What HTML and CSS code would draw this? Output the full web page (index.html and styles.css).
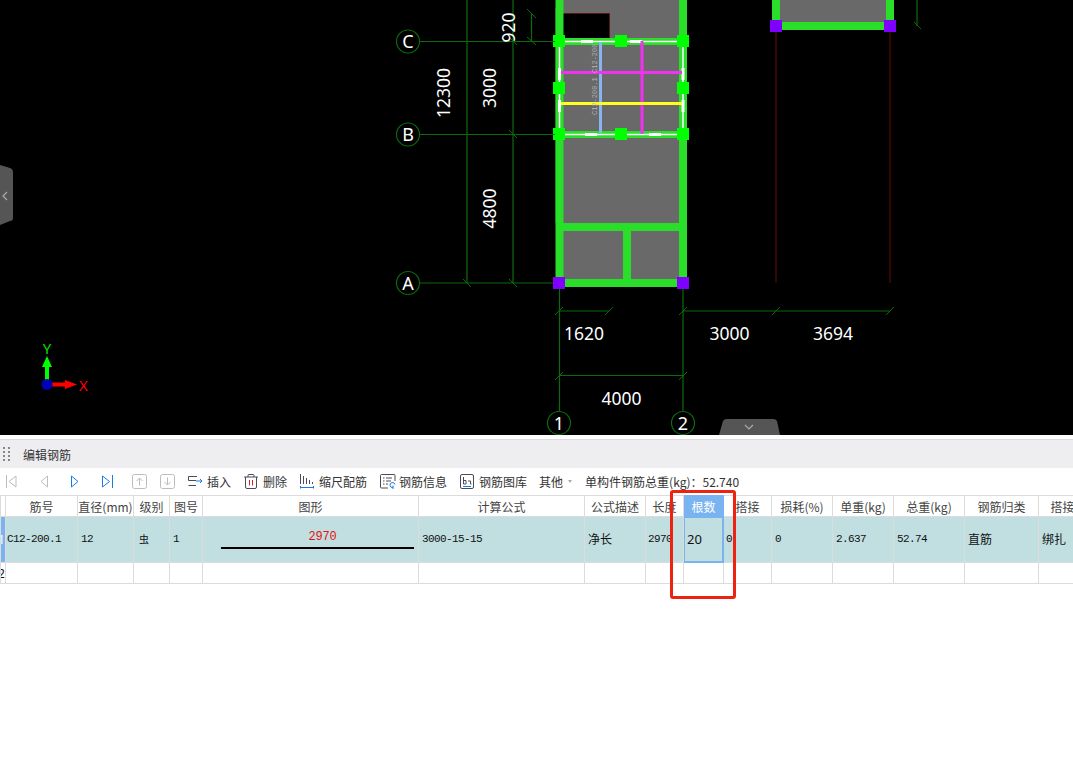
FILE: index.html
```html
<!DOCTYPE html>
<html lang="zh-CN">
  <head>
    <meta charset="UTF-8" />
    <title>编辑钢筋</title>
    <link rel="stylesheet" href="styles.css">
  </head>
  <body>
    <div class="viewport">
      <svg class="drawing" width="1073" height="435" viewBox="0 0 1073 435">
        <!-- slabs -->
        <rect class="slab" x="559" y="0" width="124" height="283" />
        <rect class="slab" x="776" y="0" width="114" height="26" />
        <path class="hole" d="M563.5 38V13.5H609.5V38" />
        <rect class="void" x="563" y="14" width="46" height="24" />

        <!-- beams -->
        <path class="beam" d="M559.5 8H559.5M559.5 0V283H683V0" />
        <path class="beam-wide" d="M555.7 8H563V223H555.7Z" />
        <path class="beam-thin" d="M559 227H683M627 227V283M776 0V26H890V0" />
        <path class="beam-sel" d="M559 41.5H683M559 134.5H683M559.5 41V134M683.5 41V134" />
        <path class="white-thin" d="M562 41.5H681M562 134.5H681M559.5 44V132M683 44V132" />
        <path class="white-thick" d="M581 41.5H593M630 41.5H642M585 134.5H597M649 134.5H661M559.5 68V80M559.5 100V112M683 68V80M683 100V112" />

        <!-- rebars in the selected span -->
        <path class="bar-blue" d="M600.5 42V133" />
        <path class="bar-magenta" d="M642 41V134M561 72.5H682" />
        <path class="bar-yellow" d="M561 103.5H682" />
        <text class="rebar-label" transform="translate(597 115) rotate(-90)">C12-200.1 C12-200</text>

        <!-- grips -->
        <g class="grip">
          <rect x="553" y="35" width="12" height="12" />
          <rect x="615" y="35" width="12" height="12" />
          <rect x="677" y="35" width="12" height="12" />
          <rect x="553" y="82" width="12" height="12" />
          <rect x="677" y="82" width="12" height="12" />
          <rect x="553" y="128" width="12" height="12" />
          <rect x="615" y="128" width="12" height="12" />
          <rect x="677" y="128" width="12" height="12" />
        </g>
        <g class="column">
          <rect x="553" y="277" width="12" height="12" />
          <rect x="677" y="277" width="12" height="12" />
          <rect x="770" y="20" width="12" height="12" />
          <rect x="884" y="20" width="12" height="12" />
        </g>

        <!-- dimension lines -->
        <path class="dim" d="M420 41.5H555M420 134.5H555M420 283H553M467 0V283M513 0V283M531.5 13V41M559.5 289V412M683 289V412M559 311H609M683 311H890M559 375.5H683M917 0V26" />
        <path class="tick" d="M463 279L471 287M509 279L517 287M509 130L517 138M509 37L517 45M527 9L536 18M527 37L536 45M555 315L563 307M605 315L613 307M679 315L687 307M772 315L780 307M886 315L894 307M555 380L563 372M679 380L687 372M914 22L921 29" />
        <path class="dim-red" d="M776 32V283M890 32V283" />

        <!-- axis bubbles -->
        <g class="bubble">
          <circle cx="408" cy="41.5" r="11.5" />
          <circle cx="408" cy="134.5" r="11.5" />
          <circle cx="408" cy="283" r="11.5" />
          <circle cx="559" cy="423" r="11.5" />
          <circle cx="683" cy="423" r="11.5" />
        </g>
        <text class="axis-name" x="408" y="48">C</text>
        <text class="axis-name" x="408" y="141">B</text>
        <text class="axis-name" x="408" y="289.5">A</text>
        <text class="axis-name" x="559" y="429.5">1</text>
        <text class="axis-name" x="683" y="429.5">2</text>

        <!-- dimension texts -->
        <text class="dim-text" x="584" y="340">1620</text>
        <text class="dim-text" x="729.5" y="340">3000</text>
        <text class="dim-text" x="833" y="340">3694</text>
        <text class="dim-text" x="621.5" y="405">4000</text>
        <text class="dim-text" transform="translate(450 93) rotate(-90)">12300</text>
        <text class="dim-text" transform="translate(496 88) rotate(-90)">3000</text>
        <text class="dim-text" transform="translate(496 208.5) rotate(-90)">4800</text>
        <text class="dim-text" transform="translate(515 27.5) rotate(-90)">920</text>

        <!-- ucs icon -->
        <path class="axis-y" d="M47 380V365" />
        <path class="axis-y-head" d="M47 356L52 367H42Z" />
        <path class="axis-x" d="M51 384.5H66" />
        <path class="axis-x-head" d="M77 384.5L65 380V389Z" />
        <circle class="axis-origin" cx="47" cy="384.5" r="5.5" />
        <text class="axis-y-label" x="47" y="354">Y</text>
        <text class="axis-x-label" x="79" y="391">X</text>

        <!-- collapse handles -->
        <path class="handle" d="M0 165L10 168Q13 169 13 172V218Q13 221 10 221L0 225Z" />
        <path class="handle-arrow" d="M7 192L3 196L7 200" />
        <path class="handle" d="M719 435L723 421Q724 419 727 419H773Q776 419 777 421L780 435Z" />
        <path class="handle-arrow" d="M745 425L749 429L753 425" />
      </svg>

      <section class="panel">
        <header class="panel-title">
          <svg class="grip-dots" width="8" height="15" viewBox="0 0 8 15">
            <path d="M0 0h2v2h-2zM5 0h2v2h-2zM0 4h2v2h-2zM5 4h2v2h-2zM0 8h2v2h-2zM5 8h2v2h-2zM0 12h2v2h-2zM5 12h2v2h-2z" />
          </svg>
          <span>编辑钢筋</span>
        </header>

        <div class="toolbar">
          <svg class="tool nav-first" width="11" height="13" viewBox="0 0 11 13"><path class="ico-off" d="M.5 0V13M10 1L3 6.5L10 12Z" /></svg>
          <svg class="tool nav-prev" width="8" height="13" viewBox="0 0 8 13"><path class="ico-off" d="M7.5 1L1 6.500L7.500 12Z" /></svg>
          <svg class="tool nav-next" width="8" height="13" viewBox="0 0 8 13"><path class="ico-blue" d="M.5 1L7 6.500L.5 12Z" /></svg>
          <svg class="tool nav-last" width="11" height="13" viewBox="0 0 11 13"><path class="ico-blue" d="M.5 1L7.500 6.500L.5 12ZM10.500 0V13" /></svg>
          <svg class="tool nav-up" width="15" height="15" viewBox="0 0 15 15"><rect class="ico-off" x=".5" y=".5" width="14" height="14" rx="2" /><path class="ico-off" d="M7.500 11.500V4M4.500 7L7.500 4L10.500 7" /></svg>
          <svg class="tool nav-down" width="15" height="15" viewBox="0 0 15 15"><rect class="ico-off" x=".5" y=".5" width="14" height="14" rx="2" /><path class="ico-off" d="M7.500 3.500V11M4.500 8L7.500 11L10.500 8" /></svg>

          <button class="tool-btn btn-insert" type="button">
            <svg width="15" height="13" viewBox="0 0 15 13"><path class="ico-dark" d="M9 1.500H.5V5.500H8M.5 10.500H8" /><path class="ico-blue" d="M8 6H14M12 4L14 6L12 8" /></svg>
            <span>插入</span>
          </button>
          <button class="tool-btn" type="button">
            <svg width="14" height="15" viewBox="0 0 14 15"><path class="ico-dark" d="M0 3H14M4 3V1.500Q4 .5 5 .5H9Q10 .5 10 1.500V3M1.500 3V13Q1.500 14.500 3 14.500H11Q12.500 14.500 12.500 13V3" /><path class="ico-red" d="M5.500 6V11.500M8.500 6V11.500" /></svg>
            <span>删除</span>
          </button>
          <button class="tool-btn" type="button">
            <svg width="14" height="15" viewBox="0 0 14 15"><path class="ico-dark" d="M.5 0V10M3.500 2V10M6.500 4V10M9.500 6V10M12.500 8V10" /><path class="ico-blue" d="M.5 12V14.500M.5 13.500H13.500M13.500 12V14.500" /></svg>
            <span>缩尺配筋</span>
          </button>
          <button class="tool-btn btn-info" type="button">
            <svg width="16" height="15" viewBox="0 0 16 15"><path class="ico-dark" d="M15 7V1.500Q15 .5 14 .5H1.500Q.5 .5 .5 1.500V13Q.5 14 1.500 14H8M3 4H4.500M6 4H12M3 7H4.500M6 7H11M3 10H4.500M6 10H8" /><path class="ico-blue" d="M15 10.500A2.500 2.500 0 1 0 13 13.500M13 11.500V15" /></svg>
            <span>钢筋信息</span>
          </button>
          <button class="tool-btn" type="button">
            <svg width="14" height="15" viewBox="0 0 14 15"><path class="ico-dark" d="M2 .5H12Q13.500 .5 13.500 2V13Q13.500 14.500 12 14.500H2Q.5 14.500 .5 13V2Q.5 .5 2 .5ZM3.500 3V10H6V6.500H3.500M8 7H10.500V10H11.500" /><path class="ico-blue" d="M3 12.500H11" /></svg>
            <span>钢筋图库</span>
          </button>
          <button class="tool-btn btn-other" type="button">
            <span>其他</span>
            <span class="caret"></span>
          </button>
          <span class="total">单构件钢筋总重(kg)：52.740</span>
        </div>

        <table class="rebar-table">
          <colgroup>
            <col class="col-row" />
            <col class="col-name" />
            <col class="col-dia" />
            <col class="col-grade" />
            <col class="col-fig" />
            <col class="col-shape" />
            <col class="col-formula" />
            <col class="col-desc" />
            <col class="col-len" />
            <col class="col-count" />
            <col class="col-lap" />
            <col class="col-loss" />
            <col class="col-unit" />
            <col class="col-weight" />
            <col class="col-type" />
            <col class="col-bind" />
          </colgroup>
          <thead>
            <tr>
              <th></th>
              <th>筋号</th>
              <th>直径(mm)</th>
              <th>级别</th>
              <th>图号</th>
              <th>图形</th>
              <th>计算公式</th>
              <th>公式描述</th>
              <th>长度</th>
              <th class="active-head">根数</th>
              <th>搭接</th>
              <th>损耗(%)</th>
              <th>单重(kg)</th>
              <th>总重(kg)</th>
              <th>钢筋归类</th>
              <th>搭接</th>
            </tr>
          </thead>
          <tbody>
            <tr class="row-selected">
              <td class="row-no row-no-on"><span>1</span></td>
              <td class="first">C12-200.1</td>
              <td>12</td>
              <td class="grade">虫</td>
              <td>1</td>
              <td class="shape">
                <div class="shape-size">2970</div>
                <div class="shape-line"></div>
              </td>
              <td>3000-15-15</td>
              <td class="cjk">净长</td>
              <td class="tight">2970</td>
              <td class="count">20</td>
              <td class="tight">0</td>
              <td>0</td>
              <td>2.637</td>
              <td>52.74</td>
              <td class="cjk">直筋</td>
              <td class="cjk">绑扎</td>
            </tr>
            <tr class="row-empty">
              <td class="row-no"><span>2</span></td>
              <td></td><td></td><td></td><td></td><td></td><td></td><td></td>
              <td></td><td></td><td></td><td></td><td></td><td></td><td></td><td></td>
            </tr>
          </tbody>
        </table>

        <!-- annotation drawn over the table -->
        <div class="callout"></div>
      </section>
    </div>
  </body>
</html>
```

FILE: styles.css
```css
html,
body {
  margin: 0;
  padding: 0;
  background-color: #fff;
}

.viewport {
  width: 1073px;
  height: 771px;
  overflow: hidden;
  font-family: "Noto Sans CJK SC", "Noto Sans", sans-serif;
  color: #333;
}

.drawing {
  display: block;
  background-color: #000;
}

/* drawing */
.slab { fill: #696969; }
.void { fill: #000; }
.hole { fill: none; stroke: #5a1414; stroke-width: 1; }
.beam { fill: none; stroke: #2adf2a; stroke-width: 8; }
.beam-wide { fill: #2adf2a; }
.beam-thin { fill: none; stroke: #2adf2a; stroke-width: 8; }
.beam-sel { fill: none; stroke: #2adf2a; stroke-width: 7; }
.white-thin { fill: none; stroke: #fff; stroke-width: 1.5; }
.white-thick { fill: none; stroke: #fff; stroke-width: 3; }
.bar-blue { stroke: #8ab4f0; stroke-width: 3; }
.bar-magenta { fill: none; stroke: #f033f0; stroke-width: 3; }
.bar-yellow { stroke: #ffff22; stroke-width: 3; }
.rebar-label { fill: #b4b4b4; font-family: "Liberation Mono", monospace; font-size: 7px; }
.grip rect { fill: #00ff00; }
.column rect { fill: #8000ff; }
.dim { fill: none; stroke: #0b6b0b; stroke-width: 1.2; }
.tick { fill: none; stroke: #0b6b0b; stroke-width: 1; }
.dim-red { fill: none; stroke: #4a0606; stroke-width: 1.5; }
.bubble circle { fill: #000; stroke: #0b6b0b; stroke-width: 1.2; }
.axis-name { fill: #fff; font-family: "Noto Sans", sans-serif; font-size: 18px; text-anchor: middle; }
.dim-text { fill: #fff; font-family: "Noto Sans", sans-serif; font-size: 17.500px; text-anchor: middle; }
.axis-y { stroke: #00ff00; stroke-width: 4; }
.axis-y-head { fill: #00ff00; }
.axis-x { stroke: #ff0000; stroke-width: 4; }
.axis-x-head { fill: #ff0000; }
.axis-origin { fill: #0000b4; }
.axis-y-label { fill: #00e000; font-family: "Noto Sans", sans-serif; font-size: 15px; text-anchor: middle; }
.axis-x-label { fill: #ff0000; font-family: "Noto Sans", sans-serif; font-size: 15px; }
.handle { fill: #555; }
.handle-arrow { fill: none; stroke: #aaa; stroke-width: 1.2; }

/* panel */
.panel {
  position: relative;
  padding-top: 4px;
}

.panel-title {
  display: flex;
  align-items: center;
  height: 28px;
  border-top: 1px solid #dcdcdc;
  background-color: #eeeef0;
  font-size: 12px;
}
.grip-dots {
  margin-left: 3px;
  margin-right: 12px;
  fill: #888;
}

.toolbar {
  display: flex;
  align-items: center;
  height: 27px;
  font-size: 12px;
}
.tool { flex: none; }
.nav-first { margin-left: 6px; }
.nav-prev { margin-left: 23px; }
.nav-next { margin-left: 23px; }
.nav-last { margin-left: 23px; }
.nav-up { margin-left: 19px; }
.nav-down { margin-left: 13px; }

.tool-btn {
  display: flex;
  align-items: center;
  gap: 5px;
  margin-left: 12px;
  padding: 0 1px 0 0;
  border: none;
  background: none;
  color: #333;
  font: inherit;
}
.btn-insert { margin-left: 13px; gap: 4px; }
.btn-info { gap: 3px; }
.btn-other { margin-left: 11px; }
.ico-off { fill: none; stroke: #bdbdbd; stroke-width: 1; }
.ico-blue { fill: none; stroke: #1a7ae8; stroke-width: 1; }
.ico-dark { fill: none; stroke: #4a4a5a; stroke-width: 1; }
.ico-red { fill: none; stroke: #e02020; stroke-width: 1; }

.caret {
  width: 0;
  height: 0;
  border-left: 2.500px solid transparent;
  border-right: 2.500px solid transparent;
  border-top: 3px solid #aaa;
}
.total { margin-left: 12px; }

/* table */
.rebar-table {
  width: 1086px;
  table-layout: fixed;
  border-collapse: collapse;
  font-family: "Liberation Mono", monospace;
  font-size: 11px;
  letter-spacing: -0.600px;
  color: #111;
}
.col-row { width: 5px; }
.col-name { width: 72px; }
.col-dia { width: 56px; }
.col-grade { width: 36px; }
.col-fig { width: 33px; }
.col-shape { width: 216px; }
.col-formula { width: 166px; }
.col-desc { width: 61px; }
.col-len { width: 38px; }
.col-count { width: 40px; }
.col-lap { width: 48px; }
.col-loss { width: 61px; }
.col-unit { width: 61px; }
.col-weight { width: 71px; }
.col-type { width: 74px; }
.col-bind { width: 48px; }

.rebar-table th,
.rebar-table td {
  padding: 0;
  border: 1px solid #dcdcdc;
  overflow: hidden;
  white-space: nowrap;
}
.rebar-table th {
  height: 20px;
  font-family: "Noto Sans CJK SC", "Noto Sans", sans-serif;
  font-size: 12px;
  font-weight: 400;
  letter-spacing: 0;
  color: #444;
  text-align: center;
}
.rebar-table td {
  padding-left: 3px;
}
.rebar-table .first {
  padding-left: 1px;
}
.row-selected td {
  box-sizing: border-box;
  height: 46px;
  padding-bottom: 2px;
  background-color: #c1dfe1;
}
.row-empty td {
  height: 20px;
}
.rebar-table .row-no {
  padding: 0;
  font-family: "Noto Sans", sans-serif;
  font-size: 12px;
  letter-spacing: 0;
}
.row-no span {
  display: block;
  margin-left: -3px;
}
.rebar-table .row-no-on {
  background-color: #7ab4f0;
  color: #fff;
}
.rebar-table .active-head {
  background-color: #7ab4f0;
  border-color: #7ab4f0;
  color: #fff;
}
.rebar-table .count {
  padding-left: 3px;
  border-color: #7ab4f0;
  box-shadow: inset 0 0 0 1px #7ab4f0;
  font-family: "Noto Sans", sans-serif;
  font-size: 13px;
  letter-spacing: 0;
}
.rebar-table .cjk {
  font-family: "Noto Sans CJK SC", sans-serif;
  font-size: 12px;
  letter-spacing: 0;
}
.rebar-table .grade {
  padding-left: 5px;
  font-family: "Noto Sans CJK SC", sans-serif;
  font-size: 10px;
  letter-spacing: 0;
}
.rebar-table .tight {
  padding-left: 2px;
}
.rebar-table .shape {
  padding-bottom: 0;
  text-align: center;
}
.shape-size {
  margin-left: 21px;
  font-size: 12px;
  letter-spacing: -0.200px;
  color: #e81010;
  line-height: 14px;
}
.shape-line {
  height: 2px;
  margin: 3px 4px 0 15px;
  background-color: #000;
}

.callout {
  position: absolute;
  left: 670px;
  top: 55px;
  width: 60px;
  height: 103px;
  border: 3px solid #ee2211;
  border-radius: 3px;
}
```
